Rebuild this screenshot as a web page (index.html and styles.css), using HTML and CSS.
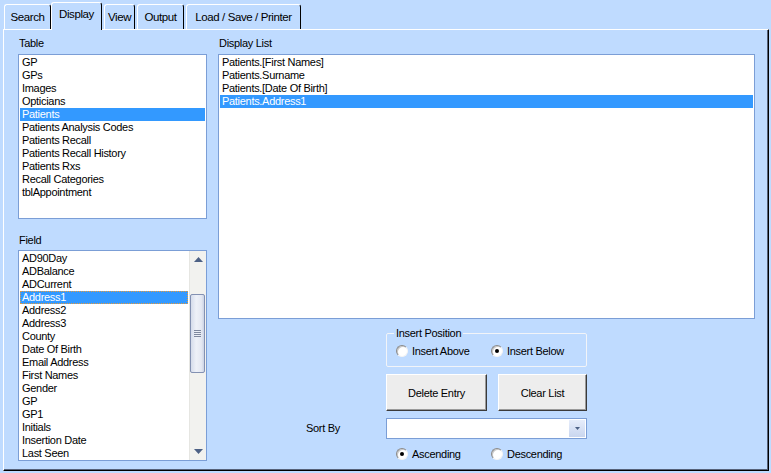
FILE: index.html
```html
<!DOCTYPE html>
<html>
<head>
<meta charset="utf-8">
<title>Display</title>
<link rel="stylesheet" href="styles.css">
</head>
<body>
<div class="tabs">
  <div class="tab tab-search">Search</div>
  <div class="tab tab-display active">Display</div>
  <div class="tab tab-view">View</div>
  <div class="tab tab-output">Output</div>
  <div class="tab tab-load">Load / Save / Printer</div>
</div>
<div class="panel">
  <div class="left">
    <div class="label">Table</div>
    <div class="listbox table-list">
      <div class="item">GP</div>
      <div class="item">GPs</div>
      <div class="item">Images</div>
      <div class="item">Opticians</div>
      <div class="item selected">Patients</div>
      <div class="item">Patients Analysis Codes</div>
      <div class="item">Patients Recall</div>
      <div class="item">Patients Recall History</div>
      <div class="item">Patients Rxs</div>
      <div class="item">Recall Categories</div>
      <div class="item">tblAppointment</div>
    </div>
    <div class="label field-label">Field</div>
    <div class="listbox field-list">
      <div class="items">
        <div class="item">AD90Day</div>
        <div class="item">ADBalance</div>
        <div class="item">ADCurrent</div>
        <div class="item selected focused">Address1</div>
        <div class="item">Address2</div>
        <div class="item">Address3</div>
        <div class="item">County</div>
        <div class="item">Date Of Birth</div>
        <div class="item">Email Address</div>
        <div class="item">First Names</div>
        <div class="item">Gender</div>
        <div class="item">GP</div>
        <div class="item">GP1</div>
        <div class="item">Initials</div>
        <div class="item">Insertion Date</div>
        <div class="item">Last Seen</div>
      </div>
      <div class="scrollbar">
        <div class="sb-btn">
          <svg width="9" height="5" viewBox="0 0 9 5"><polygon points="4.5,0 9,5 0,5" fill="#4D6185"/></svg>
        </div>
        <div class="sb-track">
          <div class="thumb">
            <div class="grip"><span></span><span></span><span></span><span></span></div>
          </div>
        </div>
        <div class="sb-btn">
          <svg width="9" height="5" viewBox="0 0 9 5"><polygon points="0,0 9,0 4.5,5" fill="#4D6185"/></svg>
        </div>
      </div>
    </div>
  </div>
  <div class="right">
    <div class="label">Display List</div>
    <div class="listbox display-list">
      <div class="item">Patients.[First Names]</div>
      <div class="item">Patients.Surname</div>
      <div class="item">Patients.[Date Of Birth]</div>
      <div class="item selected">Patients.Address1</div>
    </div>
    <div class="controls">
      <div class="group">
        <span class="group-title">Insert Position</span>
        <div class="opt"><span class="radio"></span>Insert Above</div>
        <div class="opt"><span class="radio checked"></span>Insert Below</div>
      </div>
      <div class="buttons">
        <div class="btn btn-delete">Delete Entry</div>
        <div class="btn btn-clear">Clear List</div>
      </div>
      <div class="sort-label">Sort By</div>
      <div class="combo">
        <div class="combo-btn">
          <svg width="5" height="3" viewBox="0 0 5 3"><polygon points="0,0 5,0 2.5,3" fill="#4D6185"/></svg>
        </div>
      </div>
      <div class="radio-row">
        <div class="opt"><span class="radio checked"></span>Ascending</div>
        <div class="opt"><span class="radio"></span>Descending</div>
      </div>
    </div>
  </div>
</div>
</body>
</html>
```

FILE: styles.css
```css
* { box-sizing: border-box; }
html, body { margin: 0; padding: 0; }
body {
  background: #BFDBFF;
  font-family: "Liberation Sans", Arial, sans-serif;
  font-size: 11px;
  letter-spacing: -0.3px;
  color: #000;
  width: 771px;
  height: 473px;
  overflow: hidden;
}

/* Tabs */
.tabs {
  display: flex;
  align-items: flex-end;
  height: 29px;
  padding-left: 4px;
}
.tab {
  height: 25px;
  padding-top: 5px;
  line-height: 14px;
  font-size: 11.5px;
  letter-spacing: -0.4px;
  text-align: center;
  border-top: 1px solid #fff;
  border-left: 1px solid #fff;
  border-right: 1px solid #000;
  border-radius: 3px 3px 0 0;
  margin-left: 2px;
  background: #BFDBFF;
  white-space: nowrap;
}
.tab-search { width: 47px; margin-left: 0; }
.tab-display { width: 51px; }
.tab-view { width: 31px; }
.tab-output { width: 47px; }
.tab-load { width: 115px; }
.tab.active {
  height: 28px;
  padding-top: 4px;
  margin: 0 0 -1px 0;
  position: relative;
  z-index: 1;
}

/* Panel */
.panel {
  margin-left: 3px;
  width: 766px;
  height: 442px;
  border-top: 1px solid #fff;
  border-left: 1px solid #fff;
  border-right: 1px solid #000;
  border-bottom: 1px solid #000;
  box-shadow: inset -1px -1px 0 #56627a;
  display: flex;
  gap: 11px;
  padding: 7px 0 0 14px;
}
.left { width: 189px; display: flex; flex-direction: column; }
.right { width: 537px; display: flex; flex-direction: column; }

.label {
  height: 13px;
  line-height: 13px;
  margin-bottom: 4px;
  padding-left: 1px;
}
.field-label { margin-top: 15px; margin-bottom: 3px; }

.listbox {
  background: #fff;
  border: 1px solid #7B9ED6;
  padding: 1px;
}
.table-list { height: 165px; }
.field-list { height: 211px; display: flex; padding: 0; }
.display-list { height: 265px; }

.item {
  height: 13px;
  line-height: 13px;
  padding-left: 2px;
  white-space: nowrap;
}
.item.selected { background: #3399FF; color: #fff; }
.item.focused {
  border: 1px dotted #E89B3A;
  line-height: 11px;
  padding-left: 1px;
}

.items { flex: 1; padding: 1px; }

/* Scrollbar */
.scrollbar {
  width: 17px;
  display: flex;
  flex-direction: column;
  background: #F2F2EF;
  border-left: 1px solid #E6E6E2;
}
.sb-btn {
  height: 17px;
  display: flex;
  align-items: center;
  justify-content: center;
}
.sb-track { flex: 1; padding-top: 26px; }
.thumb {
  width: 15px;
  height: 79px;
  border: 1px solid #8391B2;
  border-radius: 2px;
  background: linear-gradient(to right, #D5DCEB, #EEF1F8 40%, #E4E8F2 80%, #CBD3E5);
  display: flex;
  align-items: center;
  justify-content: center;
}
.grip { display: flex; flex-direction: column; gap: 1px; }
.grip span { display: block; width: 7px; height: 1px; background: #7E889E; }

/* Controls */
.controls {
  margin-top: 14px;
  display: grid;
  grid-template-columns: 168px 201px;
}
.group {
  grid-column: 2;
  height: 34px;
  border: 1px solid #F2F4F8;
  border-radius: 2px;
  position: relative;
  display: flex;
  align-items: center;
  padding-left: 9px;
  padding-top: 1px;
}
.group-title {
  position: absolute;
  top: -7px;
  left: 7px;
  padding: 0 2px;
  line-height: 13px;
  background: #BFDBFF;
}
.opt {
  display: flex;
  align-items: center;
  width: 95px;
  white-space: nowrap;
}
.radio {
  width: 12px;
  height: 12px;
  border-radius: 50%;
  background: #fff;
  border: 1px solid;
  border-color: #8a8a8a #f4f4f4 #f4f4f4 #8a8a8a;
  box-shadow: inset 1px 1px 0 #c8c8c8;
  margin-right: 4px;
  position: relative;
  flex: none;
}
.radio.checked::after {
  content: "";
  position: absolute;
  left: 3px;
  top: 3px;
  width: 4px;
  height: 4px;
  border-radius: 50%;
  background: #000;
}

.buttons {
  grid-column: 2;
  margin-top: 7px;
  display: flex;
  gap: 11px;
  height: 37px;
}
.btn {
  background: #EDEDED;
  border: 1px solid;
  border-color: #fff #3a3a3a #3a3a3a #fff;
  box-shadow: inset -1px -1px 0 #9a9a9a;
  display: flex;
  align-items: center;
  justify-content: center;
  padding-top: 1px;
}
.btn-delete { width: 101px; }
.btn-clear { width: 89px; }

.sort-label {
  grid-column: 1;
  margin-top: 7px;
  padding-left: 88px;
  line-height: 21px;
}
.combo {
  grid-column: 2;
  margin-top: 7px;
  height: 21px;
  background: #fff;
  border: 1px solid #7B9ED6;
  display: flex;
  justify-content: flex-end;
  padding: 1px;
}
.combo-btn {
  width: 16px;
  background: linear-gradient(#E6EDFB, #C9D6EF);
  display: flex;
  align-items: center;
  justify-content: center;
}

.radio-row {
  grid-column: 2;
  margin-top: 8px;
  height: 14px;
  display: flex;
  align-items: center;
  padding-left: 10px;
}
```
